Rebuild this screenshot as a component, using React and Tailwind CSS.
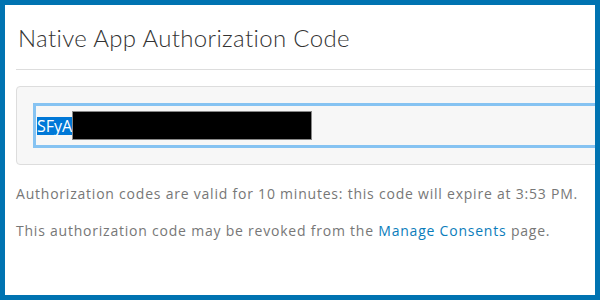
import React from 'react';

// Native app authorization code page, focused read-only input with the code selected
const App = () => {
  return (
    <div
      className="w-[600px] h-[300px] overflow-hidden border-[5px] border-[#0073b1] bg-white"
      style={{ fontFamily: '"Open Sans", Lato, sans-serif' }}
    >
      <div className="pl-[13px] pt-[17px]">
        <h1
          className="text-[24px] leading-[32px] font-light text-[#333] tracking-[0.35px]"
          style={{ fontFamily: 'Lato, sans-serif' }}
        >
          Native App Authorization Code
        </h1>
      </div>
      <div className="ml-[11px] mt-[15px] border-t border-[#ddd]" />
      <div className="ml-[11px] mt-[16px] w-[600px] rounded-[4px] border border-[#ddd] bg-[#f7f7f7] p-[16px]">
        <div className="h-[45px] border-[3px] border-[#86c3f2] bg-[#f7f7f7] flex items-center pl-[1px]">
          <span className="bg-[#0078d7] text-white text-[16px] leading-[18px] whitespace-nowrap">SFyA</span>
          <span className="block w-[240px] h-[29px] bg-black border border-[#888]" />
        </div>
      </div>
      <div className="pl-[11px] text-[14px] text-[#777] tracking-[0.78px]">
        <p className="mt-[19px] leading-[20px]">
          Authorization codes are valid for 10 minutes: this code will expire at 3:53 PM.
        </p>
        <p className="mt-[17px] leading-[20px]">
          This authorization code may be revoked from the{' '}
          <a href="#" className="text-[#0b7dbb]">Manage Consents</a> page.
        </p>
      </div>
    </div>
  );
};

export default App;
